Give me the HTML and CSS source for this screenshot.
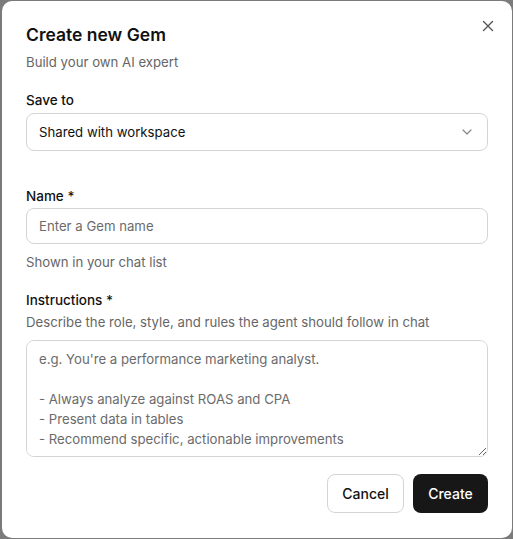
FILE: index.html
```html
<!DOCTYPE html>
<html lang="en">
<head>
    <meta charset="UTF-8">
    <meta name="viewport" content="width=device-width, initial-scale=1.0">
    <title>Create new Gem</title>
    <link rel="stylesheet" href="styles.css">
</head>
<body>
    <div class="dialog">
        <button class="close-btn" aria-label="Close">
            <svg width="12" height="12" viewBox="0 0 12 12"><path d="M1.5 1.5 L10.5 10.5 M10.5 1.5 L1.5 10.5" stroke="#555" stroke-width="1.4" stroke-linecap="round"/></svg>
        </button>
        <h2 class="dialog-title">Create new Gem</h2>
        <p class="dialog-sub">Build your own AI expert</p>

        <label class="field-label first">Save to</label>
        <div class="select-box">
            <span>Shared with workspace</span>
            <svg width="12" height="8" viewBox="0 0 12 8"><path d="M2 2 L6 6 L10 2" fill="none" stroke="#888" stroke-width="1.2" stroke-linecap="round" stroke-linejoin="round"/></svg>
        </div>

        <label class="field-label name-label">Name *</label>
        <input type="text" class="text-input" placeholder="Enter a Gem name">
        <p class="hint">Shown in your chat list</p>

        <label class="field-label instr-label">Instructions *</label>
        <p class="hint desc">Describe the role, style, and rules the agent should follow in chat</p>
        <textarea class="text-area" placeholder="e.g. You're a performance marketing analyst.

- Always analyze against ROAS and CPA
- Present data in tables
- Recommend specific, actionable improvements"></textarea>

        <div class="actions">
            <button class="btn btn-cancel">Cancel</button>
            <button class="btn btn-create">Create</button>
        </div>
    </div>
</body>
</html>
```

FILE: styles.css
```css
body {
    font-family: Inter, "Noto Sans", Arial, sans-serif;
    margin: 0;
    padding: 1px 1px 1px 2px;
    background: #7b7b7b;
    height: 539px;
    box-sizing: border-box;
    overflow: hidden;
}
.dialog {
    position: relative;
    background: white;
    border-radius: 10px;
    height: 537px;
    box-sizing: border-box;
    padding: 23px 24px 0 24px;
    display: flex;
    flex-direction: column;
    color: #111;
}
.close-btn {
    position: absolute;
    top: 17px;
    right: 16px;
    background: none;
    border: none;
    padding: 2px;
    cursor: pointer;
    display: flex;
}
.dialog-title {
    margin: 0;
    font-size: 17.5px;
    font-weight: 600;
    line-height: 22px;
}
.dialog-sub {
    margin: 6px 0 0 0;
    font-size: 13.2px;
    line-height: 20px;
    color: #666;
}
.field-label {
    display: block;
    font-size: 13.5px;
    font-weight: 500;
    line-height: 20px;
}
.field-label.first {
    margin-top: 18px;
}
.name-label {
    margin-top: 35px;
}
.instr-label {
    margin-top: 18px;
}
.select-box {
    margin-top: 3px;
    height: 38px;
    box-sizing: border-box;
    border: 1px solid #d4d4d4;
    border-radius: 8px;
    padding: 0 14px 0 12px;
    display: flex;
    align-items: center;
    justify-content: space-between;
    font-size: 13.2px;
}
.text-input {
    margin-top: 2px;
    height: 36px;
    box-sizing: border-box;
    border: 1px solid #d4d4d4;
    border-radius: 8px;
    padding: 0 12px;
    font-family: inherit;
    font-size: 13.2px;
    width: 100%;
}
.text-input::placeholder,
.text-area::placeholder {
    color: #6b6b6b;
}
.hint {
    margin: 8px 0 0 0;
    font-size: 13.2px;
    line-height: 20px;
    color: #666;
}
.hint.desc {
    margin-top: 2px;
}
.text-area {
    margin-top: 8px;
    height: 117px;
    box-sizing: border-box;
    border: 1px solid #d4d4d4;
    border-radius: 8px;
    padding: 8px 12px;
    font-family: inherit;
    font-size: 13.2px;
    line-height: 20px;
    width: 100%;
    resize: vertical;
}
.actions {
    margin-top: 17px;
    display: flex;
    justify-content: flex-end;
    gap: 9px;
}
.btn {
    height: 39px;
    border-radius: 8px;
    font-family: inherit;
    font-size: 14px;
    font-weight: 500;
    cursor: pointer;
}
.btn-cancel {
    width: 77px;
    background: white;
    border: 1px solid #d4d4d4;
    color: #111;
}
.btn-create {
    width: 75px;
    background: #171717;
    border: none;
    color: white;
}
```
